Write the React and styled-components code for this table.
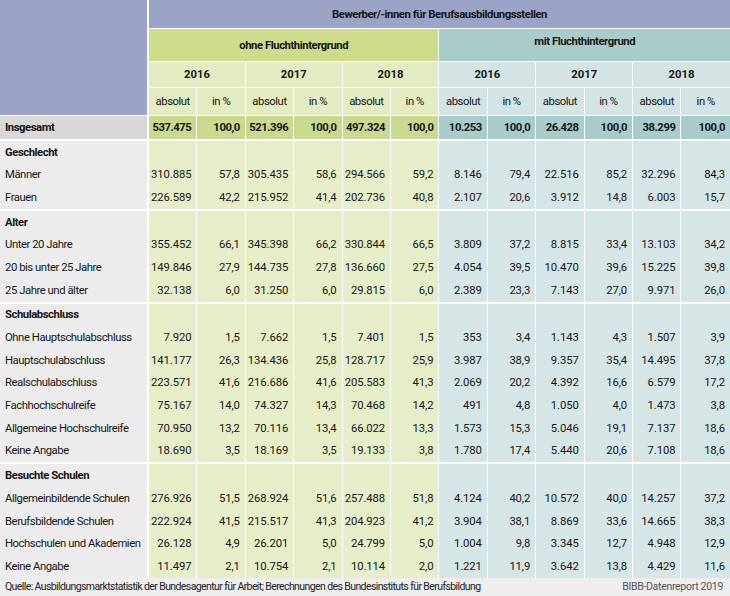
import React from 'react';
import styled, { createGlobalStyle } from 'styled-components';

const GlobalStyle = createGlobalStyle`
  body {
    margin: 0;
    background: #fff;
    font-family: Roboto, 'Liberation Sans', sans-serif;
    color: #161616;
  }
`;

const total = ['537.475', '100,0', '521.396', '100,0', '497.324', '100,0', '10.253', '100,0', '26.428', '100,0', '38.299', '100,0'];

const groups = [
  {
    title: 'Geschlecht',
    rows: [
      ['Männer', '310.885', '57,8', '305.435', '58,6', '294.566', '59,2', '8.146', '79,4', '22.516', '85,2', '32.296', '84,3'],
      ['Frauen', '226.589', '42,2', '215.952', '41,4', '202.736', '40,8', '2.107', '20,6', '3.912', '14,8', '6.003', '15,7'],
    ],
  },
  {
    title: 'Alter',
    rows: [
      ['Unter 20 Jahre', '355.452', '66,1', '345.398', '66,2', '330.844', '66,5', '3.809', '37,2', '8.815', '33,4', '13.103', '34,2'],
      ['20 bis unter 25 Jahre', '149.846', '27,9', '144.735', '27,8', '136.660', '27,5', '4.054', '39,5', '10.470', '39,6', '15.225', '39,8'],
      ['25 Jahre und älter', '32.138', '6,0', '31.250', '6,0', '29.815', '6,0', '2.389', '23,3', '7.143', '27,0', '9.971', '26,0'],
    ],
  },
  {
    title: 'Schulabschluss',
    rows: [
      ['Ohne Hauptschulabschluss', '7.920', '1,5', '7.662', '1,5', '7.401', '1,5', '353', '3,4', '1.143', '4,3', '1.507', '3,9'],
      ['Hauptschulabschluss', '141.177', '26,3', '134.436', '25,8', '128.717', '25,9', '3.987', '38,9', '9.357', '35,4', '14.495', '37,8'],
      ['Realschulabschluss', '223.571', '41,6', '216.686', '41,6', '205.583', '41,3', '2.069', '20,2', '4.392', '16,6', '6.579', '17,2'],
      ['Fachhochschulreife', '75.167', '14,0', '74.327', '14,3', '70.468', '14,2', '491', '4,8', '1.050', '4,0', '1.473', '3,8'],
      ['Allgemeine Hochschulreife', '70.950', '13,2', '70.116', '13,4', '66.022', '13,3', '1.573', '15,3', '5.046', '19,1', '7.137', '18,6'],
      ['Keine Angabe', '18.690', '3,5', '18.169', '3,5', '19.133', '3,8', '1.780', '17,4', '5.440', '20,6', '7.108', '18,6'],
    ],
  },
  {
    title: 'Besuchte Schulen',
    rows: [
      ['Allgemeinbildende Schulen', '276.926', '51,5', '268.924', '51,6', '257.488', '51,8', '4.124', '40,2', '10.572', '40,0', '14.257', '37,2'],
      ['Berufsbildende Schulen', '222.924', '41,5', '215.517', '41,3', '204.923', '41,2', '3.904', '38,1', '8.869', '33,6', '14.665', '38,3'],
      ['Hochschulen und Akademien', '26.128', '4,9', '26.201', '5,0', '24.799', '5,0', '1.004', '9,8', '3.345', '12,7', '4.948', '12,9'],
      ['Keine Angabe', '11.497', '2,1', '10.754', '2,1', '10.114', '2,0', '1.221', '11,9', '3.642', '13,8', '4.429', '11,6'],
    ],
  },
];

const years = ['2016', '2017', '2018'];

// colours per tone and row kind
const palette = {
  green: { head: '#cddb8d', sub: '#e2ebc1', total: '#c9d98f', body: '#e5eec9' },
  teal: { head: '#a9cccb', sub: '#d4e4e4', total: '#a8cbcb', body: '#d6e5e6' },
};

const toneOf = i => (i < 6 ? 'green' : 'teal');

const App = () => (
  <>
    <GlobalStyle />
    <Page>
      <Table>
        <colgroup>
          <col style={{ width: 149 }} />
          {total.map((_, i) => <col key={i} />)}
        </colgroup>
        <thead>
          <tr>
            <Corner rowSpan={4} />
            <TitleCell colSpan={12}>Bewerber/-innen für Berufsausbildungsstellen</TitleCell>
          </tr>
          <tr>
            <GroupHead colSpan={6} $tone="green">ohne Fluchthintergrund</GroupHead>
            <GroupHead colSpan={6} $tone="teal" $raised>mit Fluchthintergrund</GroupHead>
          </tr>
          <tr>
            {[0, 1].map(g =>
              years.map(y => (
                <YearHead key={g + y} colSpan={2} $tone={g ? 'teal' : 'green'}>{y}</YearHead>
              ))
            )}
          </tr>
          <tr>
            {total.map((_, i) => (
              <UnitHead key={i} $tone={toneOf(i)}>{i % 2 ? 'in %' : 'absolut'}</UnitHead>
            ))}
          </tr>
        </thead>
        <tbody>
          <tr>
            <LabelCell $total>Insgesamt</LabelCell>
            {total.map((v, i) => <NumCell key={i} $tone={toneOf(i)} $total>{v}</NumCell>)}
          </tr>
          {groups.map(group => (
            <React.Fragment key={group.title}>
              <tr>
                <LabelCell $bold $first>{group.title}</LabelCell>
                {total.map((_, i) => <NumCell key={i} $tone={toneOf(i)} $first />)}
              </tr>
              {group.rows.map(([label, ...values], r) => (
                <tr key={r}>
                  <LabelCell>{label}</LabelCell>
                  {values.map((v, i) => <NumCell key={i} $tone={toneOf(i)}>{v}</NumCell>)}
                </tr>
              ))}
            </React.Fragment>
          ))}
        </tbody>
      </Table>
      <Footer>
        <span>Quelle: Ausbildungsmarktstatistik der Bundesagentur für Arbeit; Berechnungen des Bundesinstituts für Berufsbildung</span>
        <Credit>BIBB-Datenreport 2019</Credit>
      </Footer>
    </Page>
  </>
);

const Page = styled.div`
  width: 730px;
  height: 596px;
  display: flex;
  flex-direction: column;
  background: #eeeeee;
  font-size: 11.3px;
  letter-spacing: -0.45px;
  line-height: 13px;
`;

const Table = styled.table`
  width: 730px;
  table-layout: fixed;
  border-collapse: separate;
  border-spacing: 0;
  flex: none;

  td, th {
    padding: 0;
    border-right: 1px solid #fff;
    white-space: nowrap;
    overflow: hidden;
  }
  td:last-child, th:last-child {
    border-right: none;
  }
`;

const Corner = styled.th`
  background: #9ba4c6;
  border-right: 2px solid #fff !important;
  border-bottom: 1px solid #fff;
`;

const TitleCell = styled.th`
  height: 28px;
  background: #9ba4c6;
  border-bottom: 1px solid #fff;
  font-weight: bold;
  text-align: center;
`;

const GroupHead = styled.th`
  height: ${p => (p.$raised ? 'auto' : '32px')};
  background: ${p => palette[p.$tone].head};
  border-bottom: 1px solid #fff;
  font-weight: bold;
  text-align: center;
  vertical-align: ${p => (p.$raised ? 'top' : 'middle')};
  padding-top: ${p => (p.$raised ? '6px' : '0')} !important;
`;

const YearHead = styled.th`
  height: 25px;
  background: ${p => palette[p.$tone].sub};
  border-bottom: 1px solid #fff;
  font-weight: bold;
  letter-spacing: 0;
  text-align: center;
`;

const UnitHead = styled.th`
  height: 27px;
  background: ${p => palette[p.$tone].sub};
  border-bottom: 1px solid #fff;
  font-weight: normal;
  text-align: center;
`;

const LabelCell = styled.td`
  height: 22.7px;
  padding-left: 5px !important;
  background: ${p => (p.$total ? '#d8d8d8' : '#ececec')};
  font-weight: ${p => (p.$total || p.$bold ? 'bold' : 'normal')};
  border-right: 2px solid #fff !important;
  border-top: ${p => (p.$first ? '2px solid #fff' : 'none')};
`;

const NumCell = styled.td`
  background: ${p => palette[p.$tone][p.$total ? 'total' : 'body']};
  font-weight: ${p => (p.$total ? 'bold' : 'normal')};
  letter-spacing: ${p => (p.$total ? '-0.45px' : '-0.1px')};
  text-align: right;
  padding-right: 5px !important;
  border-top: ${p => (p.$first ? '2px solid #fff' : 'none')};
`;

const Footer = styled.div`
  flex: 1;
  display: flex;
  align-items: center;
  justify-content: space-between;
  padding: 0 7px 0 5px;
  background: #eeeeee;
  font-size: 10.5px;
  letter-spacing: -0.6px;
  color: #222;
`;

const Credit = styled.span`
  color: #555;
  letter-spacing: -0.3px;
`;

export default App;
